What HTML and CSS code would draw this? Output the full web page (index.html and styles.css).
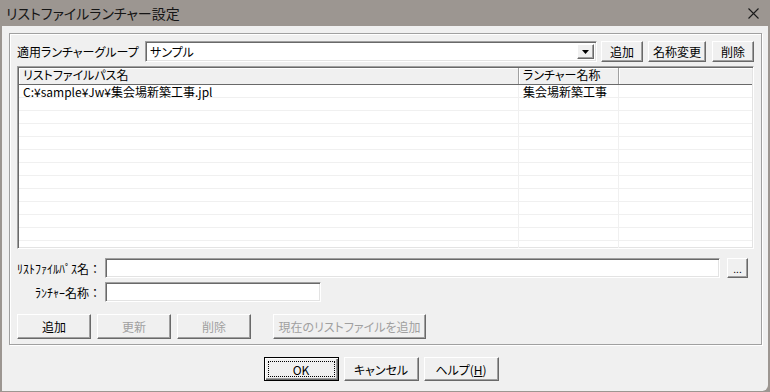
FILE: index.html
```html
<!DOCTYPE html>
<html>
<head>
    <title>リストファイルランチャー設定</title>
    <link rel="stylesheet" href="styles.css">
</head>
<body>
    <div class="window">
        <div class="titlebar">
            <span class="title">リストファイルランチャー設定</span>
            <svg class="close" width="11" height="11" viewBox="0 0 11 11">
                <path d="M0.5 0.5 L10.5 10.5 M10.5 0.5 L0.5 10.5" stroke="#1a1a1a" stroke-width="1.1" fill="none"/>
            </svg>
        </div>

        <div class="client">
            <div class="group">
                <div class="group-row">
                    <span class="group-label">適用ランチャーグループ</span>
                    <div class="combo">
                        <span class="combo-text">サンプル</span>
                        <span class="combo-btn">
                            <svg width="7" height="4" viewBox="0 0 7 4"><polygon points="0,0 7,0 3.5,4" fill="#000"/></svg>
                        </span>
                    </div>
                    <button class="btn btn-small btn-first">追加</button>
                    <button class="btn btn-small btn-rename">名称変更</button>
                    <button class="btn btn-small btn-delete">削除</button>
                </div>

                <div class="list">
                    <div class="list-head">
                        <div class="col col-path">リストファイルパス名</div>
                        <div class="col col-name">ランチャー名称</div>
                        <div class="col col-rest"></div>
                    </div>
                    <div id="rows" class="list-body"></div>
                </div>

                <div class="field field-path">
                    <span class="field-label">ﾘｽﾄﾌｧｲﾙﾊﾟｽ名：</span>
                    <div class="textbox textbox-path"></div>
                    <button class="btn btn-browse">...</button>
                </div>
                <div class="field field-name">
                    <span class="field-label">ﾗﾝﾁｬｰ名称：</span>
                    <div class="textbox textbox-name"></div>
                </div>

                <div class="actions">
                    <button class="btn btn-action">追加</button>
                    <button class="btn btn-action" disabled>更新</button>
                    <button class="btn btn-action" disabled>削除</button>
                    <button class="btn btn-current" disabled>現在のリストファイルを追加</button>
                </div>
            </div>

            <div class="footer">
                <button class="btn btn-footer btn-default"><span class="focus">OK</span></button>
                <button class="btn btn-footer">キャンセル</button>
                <button class="btn btn-footer">ヘルプ(<u>H</u>)</button>
            </div>
        </div>
    </div>

    <script>
        document.addEventListener('DOMContentLoaded', function() {
            const rowsContainer = document.getElementById('rows');
            const launchers = [
                { path: 'C:¥sample¥Jw¥集会場新築工事.jpl', name: '集会場新築工事' }
            ];

            // fill the list with empty lines like the real list view
            for (let i = 0; i < 13; i++) {
                const item = launchers[i] || { path: '', name: '' };
                const row = document.createElement('div');
                row.className = 'row';
                row.innerHTML = `
                    <div class="cell col-path">${item.path}</div>
                    <div class="cell col-name">${item.name}</div>
                    <div class="cell col-rest"></div>
                `;
                rowsContainer.appendChild(row);
            }
        });
    </script>
</body>
</html>
```

FILE: styles.css
```css
/* Base styles */
* {
    margin: 0;
    padding: 0;
    box-sizing: border-box;
}

body {
    width: 770px;
    height: 392px;
    overflow: hidden;
    background-color: #9c9691;
    font-family: "Noto Sans CJK JP", sans-serif;
    font-size: 12px;
    color: #000;
}

button {
    font-family: inherit;
    font-size: 12px;
    color: #000;
}

.window {
    height: 392px;
    display: flex;
    flex-direction: column;
}

/* Title bar */
.titlebar {
    height: 26px;
    flex: none;
    display: flex;
    align-items: center;
    justify-content: space-between;
    padding: 0 11px 0 6px;
}

.title {
    font-size: 14px;
    font-feature-settings: "palt";
    color: #151515;
}

.close {
    display: block;
}

/* Client area */
.client {
    flex: 1;
    background-color: #f0f0f0;
    margin: 0 2px 1px 2px;
    border-bottom-right-radius: 6px;
    padding: 7px 6px 0 7px;
}

.group {
    height: 312px;
    border: 1px solid #a0a0a0;
    box-shadow: inset 1px 1px #fff, 1px 1px #fff;
    padding: 7px 7px 0 7px;
    display: flex;
    flex-direction: column;
}

.group-row {
    height: 21px;
    display: flex;
    align-items: center;
}

.group-label {
    width: 128px;
    flex: none;
    font-feature-settings: "palt";
}

/* Sunken controls */
.combo,
.textbox,
.list {
    background-color: #fff;
    border: 1px solid;
    border-color: #a0a0a0 #fff #fff #a0a0a0;
    box-shadow: inset 1px 1px #696969, inset -1px -1px #e3e3e3;
}

.combo {
    width: 452px;
    height: 21px;
    flex: none;
    display: flex;
    align-items: center;
    padding: 2px;
}

.combo-text {
    flex: 1;
    padding-left: 2px;
    font-feature-settings: "palt";
}

.combo-btn {
    width: 17px;
    height: 100%;
    display: flex;
    align-items: center;
    justify-content: center;
    background-color: #f0f0f0;
    border: 1px solid;
    border-color: #fff #696969 #696969 #fff;
    box-shadow: inset -1px -1px #a0a0a0;
}

/* Buttons */
.btn {
    background-color: #f0f0f0;
    border: 1px solid;
    border-color: #fff #696969 #696969 #fff;
    box-shadow: inset -1px -1px #a0a0a0;
    display: flex;
    align-items: center;
    justify-content: center;
    flex: none;
    font-feature-settings: "palt";
}

.btn:disabled {
    color: #a0a0a0;
}

.btn-small {
    height: 21px;
}

.btn-first {
    width: 42px;
    margin-left: 4px;
}

.btn-rename {
    width: 58px;
    margin-left: 5px;
}

.btn-delete {
    width: 42px;
    margin-left: 6px;
}

/* List view */
.list {
    margin-top: 4px;
    height: 183px;
    padding: 1px;
    overflow: hidden;
}

.list-head {
    height: 17px;
    display: flex;
    border-bottom: 1px solid #696969;
    background-color: #f0f0f0;
}

.list-head .col {
    line-height: 12px;
    padding: 1px 0 0 4px;
    border-right: 1px solid #a0a0a0;
    box-shadow: inset 1px 1px #fff;
    font-feature-settings: "palt";
}

.col-path {
    width: 500px;
}

.col-name {
    width: 100px;
}

.col-rest {
    flex: 1;
}

.list-head .col-rest {
    border-right: none;
}

.row {
    height: 13px;
    display: flex;
    border-bottom: 1px solid #f0f0f0;
}

.cell {
    line-height: 12px;
    padding: 1px 0 0 4px;
    border-right: 1px solid #f0f0f0;
    white-space: nowrap;
}

.row .col-rest {
    border-right: none;
}

/* Edit fields */
.field {
    height: 20px;
    display: flex;
    align-items: center;
    margin-left: -4px;
}

.field-path {
    margin-top: 9px;
}

.field-name {
    margin-top: 4px;
}

.field-label {
    width: 92px;
    flex: none;
    text-align: right;
    padding-right: 4px;
}

.textbox {
    height: 20px;
}

.textbox-path {
    width: 615px;
}

.textbox-name {
    width: 216px;
}

.btn-browse {
    width: 21px;
    height: 20px;
    margin-left: 7px;
    font-size: 10px;
}

/* Action buttons */
.actions {
    margin-top: 12px;
    display: flex;
    gap: 6px;
}

.btn-action {
    width: 74px;
    height: 25px;
}

.btn-current {
    width: 153px;
    height: 25px;
    margin-left: 16px;
}

/* Dialog buttons */
.footer {
    margin-top: 12px;
    display: flex;
    justify-content: center;
    gap: 5px;
    padding-right: 9px;
}

.btn-footer {
    width: 75px;
    height: 24px;
}

.btn-default {
    border-color: #000;
    box-shadow: inset 1px 1px #fff, inset -1px -1px #696969, inset -2px -2px #a0a0a0;
    padding: 3px;
}

.focus {
    display: flex;
    align-items: center;
    justify-content: center;
    width: 100%;
    height: 100%;
    border: 1px dotted #000;
}
```
